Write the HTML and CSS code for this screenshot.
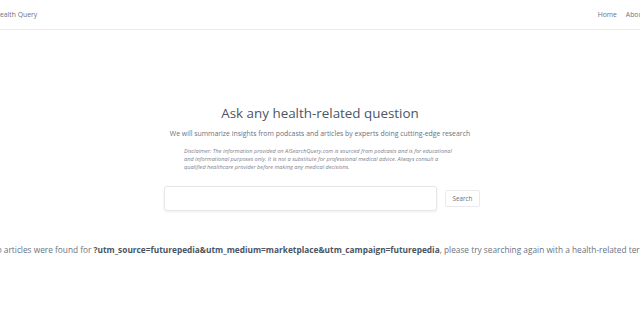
FILE: index.html
```html
<!DOCTYPE html>
<html lang="en">
<head>
<meta charset="utf-8">
<title>AI Search Query</title>
<link rel="stylesheet" href="styles.css">
</head>
<body>
<header class="nav">
  <a class="brand" href="#">Health Query</a>
  <nav class="links">
    <a href="#">Home</a>
    <a href="#">About</a>
  </nav>
</header>
<main class="hero">
  <h1 class="title">Ask any health-related question</h1>
  <p class="subtitle">We will summarize insights from podcasts and articles by experts doing cutting-edge research</p>
  <p class="disclaimer">Disclaimer: The information provided on AISearchQuery.com is sourced from podcasts and is for educational and informational purposes only. It is not a substitute for professional medical advice. Always consult a qualified healthcare provider before making any medical decisions.</p>
  <form class="search">
    <input class="search-input" type="text" aria-label="Question">
    <button class="search-btn" type="button">Search</button>
  </form>
  <div class="result-row">
    <p class="result">No articles were found for <strong>?utm_source=futurepedia&amp;utm_medium=marketplace&amp;utm_campaign=futurepedia</strong>, please try searching again with a health-related term.</p>
  </div>
</main>
</body>
</html>
```
FILE: styles.css
```css
html, body {
  margin: 0;
  padding: 0;
  background: #ffffff;
  overflow: hidden;
}
body {
  font-family: "Open Sans", "Noto Sans", sans-serif;
  color: #6b7280;
  width: 640px;
  height: 334px;
}
a {
  color: inherit;
  text-decoration: none;
}
.nav {
  display: flex;
  justify-content: space-between;
  align-items: center;
  height: 29px;
  margin: 0 -5px 0 -5px;
  border-bottom: 1px solid #e8eaee;
  font-size: 6.8px;
  color: #6b7280;
}
.links {
  display: flex;
  gap: 9px;
}
.hero {
  display: flex;
  flex-direction: column;
  align-items: center;
  padding-top: 74px;
}
.title {
  margin: 0;
  font-size: 13.4px;
  line-height: 18px;
  font-weight: 400;
  color: #4b5563;
}
.subtitle {
  margin: 6px 0 0;
  font-size: 6.9px;
  line-height: 12px;
  color: #6b7280;
}
.disclaimer {
  margin: 7px 0 0;
  width: 272px;
  padding-left: 0;
  font-size: 5.6px;
  line-height: 8px;
  font-style: italic;
  color: #7b8190;
}
.search {
  display: flex;
  align-items: center;
  gap: 8px;
  margin-top: 15px;
  padding-left: 4px;
}
.search-input {
  box-sizing: border-box;
  width: 273px;
  height: 25px;
  border: 1px solid #e5e7eb;
  border-radius: 3px;
  box-shadow: 0 1px 3px rgba(0, 0, 0, 0.07);
  background: #fff;
  outline: none;
}
.search-btn {
  box-sizing: border-box;
  width: 35px;
  height: 17px;
  padding: 0;
  border: 1px solid #e8eaee;
  border-radius: 2px;
  background: #fff;
  font-family: inherit;
  font-size: 6.3px;
  color: #6b7280;
}
.result-row {
  display: flex;
  justify-content: center;
  width: 640px;
  margin-top: 33px;
}
.result {
  margin: 0;
  flex: none;
  white-space: nowrap;
  font-size: 8.3px;
  line-height: 12px;
  color: #6b7280;
}
.result strong {
  font-weight: 700;
  color: #4b5563;
}
```
